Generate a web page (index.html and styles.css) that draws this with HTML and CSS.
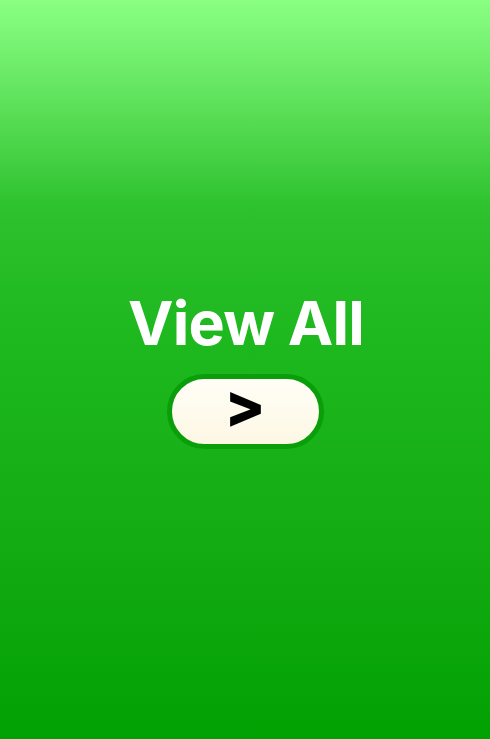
FILE: index.html
```html
<!DOCTYPE html>
<html lang="en">
<head>
<meta charset="utf-8">
<title>View All</title>
<link rel="stylesheet" href="styles.css">
</head>
<body>
<main class="screen">
  <h1 class="title">View All</h1>
  <button class="pill" type="button"><span class="arrow">&gt;</span></button>
</main>
</body>
</html>
```
FILE: styles.css
```css
html, body {
  margin: 0;
  padding: 0;
  height: 100%;
}
body {
  font-family: Inter, "Liberation Sans", sans-serif;
}
.screen {
  min-height: 739px;
  box-sizing: border-box;
  display: flex;
  flex-direction: column;
  align-items: center;
  padding-top: 283px;
  background: linear-gradient(180deg, #8aff82 0%, #72ee6d 8%, #2ec22e 28%, #1eb81f 45%, #12ab12 75%, #02a102 100%);
}
.title {
  margin: 0;
  color: #ffffff;
  font-size: 61px;
  font-weight: 700;
  line-height: 80px;
  letter-spacing: -0.8px;
  padding-left: 2px;
}
.pill {
  margin-top: 11px;
  width: 157px;
  height: 75px;
  box-sizing: border-box;
  border: 5px solid #0a9f0a;
  border-radius: 38px;
  background: linear-gradient(180deg, #fffef6 0%, #fdf7e4 100%);
  display: flex;
  align-items: center;
  justify-content: center;
  padding: 0 0 14px 0;
}
.arrow {
  font-family: Inter, "Liberation Sans", sans-serif;
  font-size: 60px;
  font-weight: 800;
  color: #000;
  line-height: 1;
}
```
